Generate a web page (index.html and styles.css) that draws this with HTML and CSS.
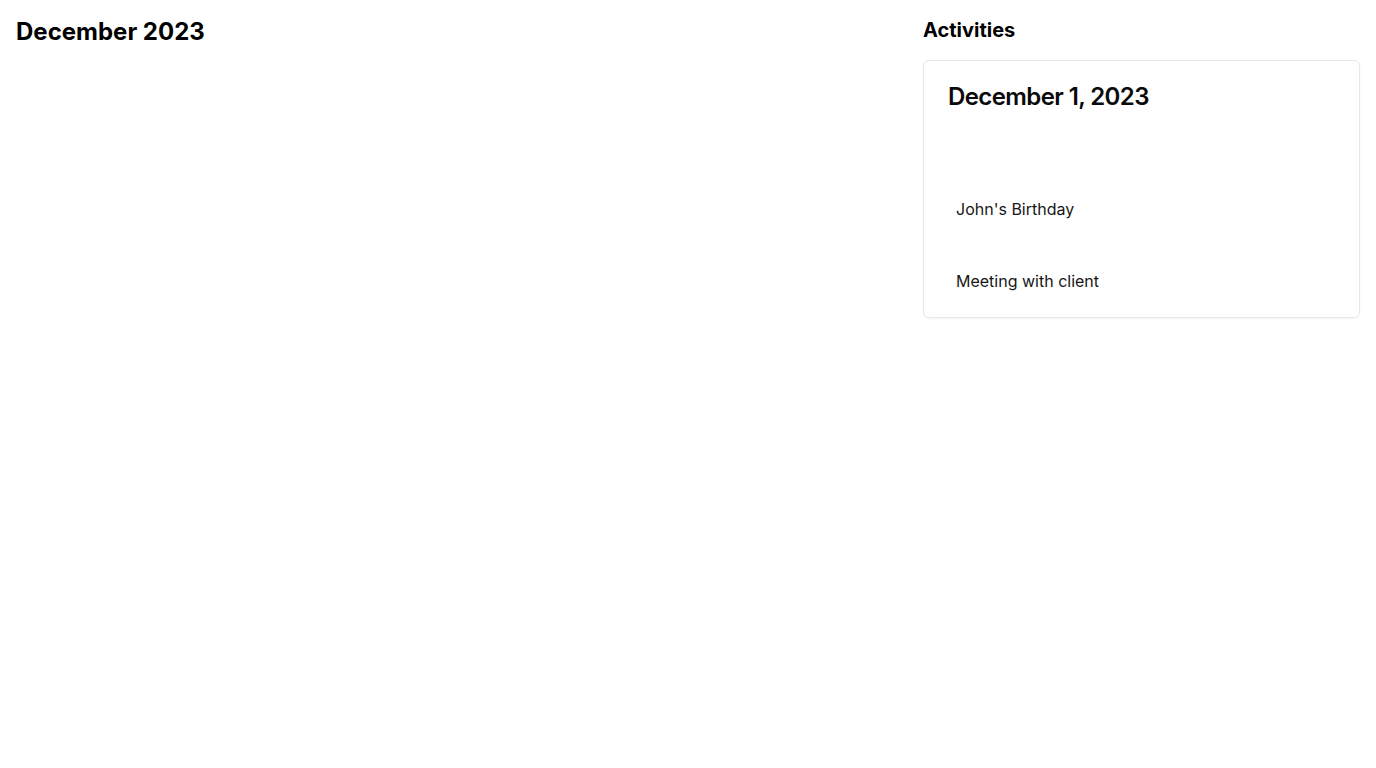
FILE: index.html
```html
<!DOCTYPE html>
<html>
<head>
<meta charset="utf-8">
<link rel="stylesheet" href="styles.css">
</head>
<body>
<div class="page">
  <main class="calendar">
    <h1 class="month-title">December 2023</h1>
  </main>
  <aside class="sidebar">
    <h2 class="sidebar-title">Activities</h2>
    <div class="card">
      <h3 class="card-title">December 1, 2023</h3>
      <ul class="activity-list">
        <li class="activity">John's Birthday</li>
        <li class="activity">Meeting with client</li>
      </ul>
    </div>
  </aside>
</div>
</body>
</html>
```

FILE: styles.css
```css
* { box-sizing: border-box; }
html, body { margin: 0; padding: 0; background: #fff; }
body {
  font-family: Inter, "Noto Sans", sans-serif;
  color: #0a0a0a;
}
.page {
  display: flex;
  gap: 16px;
  padding: 16px;
}
.calendar {
  flex: 1;
}
.month-title {
  margin: 0;
  font-size: 24px;
  line-height: 31px;
  font-weight: 700;
  color: #000;
}
.sidebar {
  width: 437px;
  flex-shrink: 0;
}
.sidebar-title {
  margin: 0;
  font-size: 20px;
  line-height: 28px;
  font-weight: 700;
  color: #000;
}
.card {
  margin-top: 16px;
  border: 1px solid #e5e7eb;
  border-radius: 6px;
  box-shadow: 0 1px 2px rgba(0,0,0,0.05);
  padding: 21px 24px 0;
}
.card-title {
  margin: 0;
  font-size: 24px;
  line-height: 29px;
  font-weight: 600;
  letter-spacing: -0.025em;
  color: #0a0a0a;
}
.activity-list {
  list-style: none;
  margin: 62px 0 0;
  padding: 0;
}
.activity {
  padding: 24px 8px;
  font-size: 16px;
  line-height: 24px;
  color: #171717;
}
```
